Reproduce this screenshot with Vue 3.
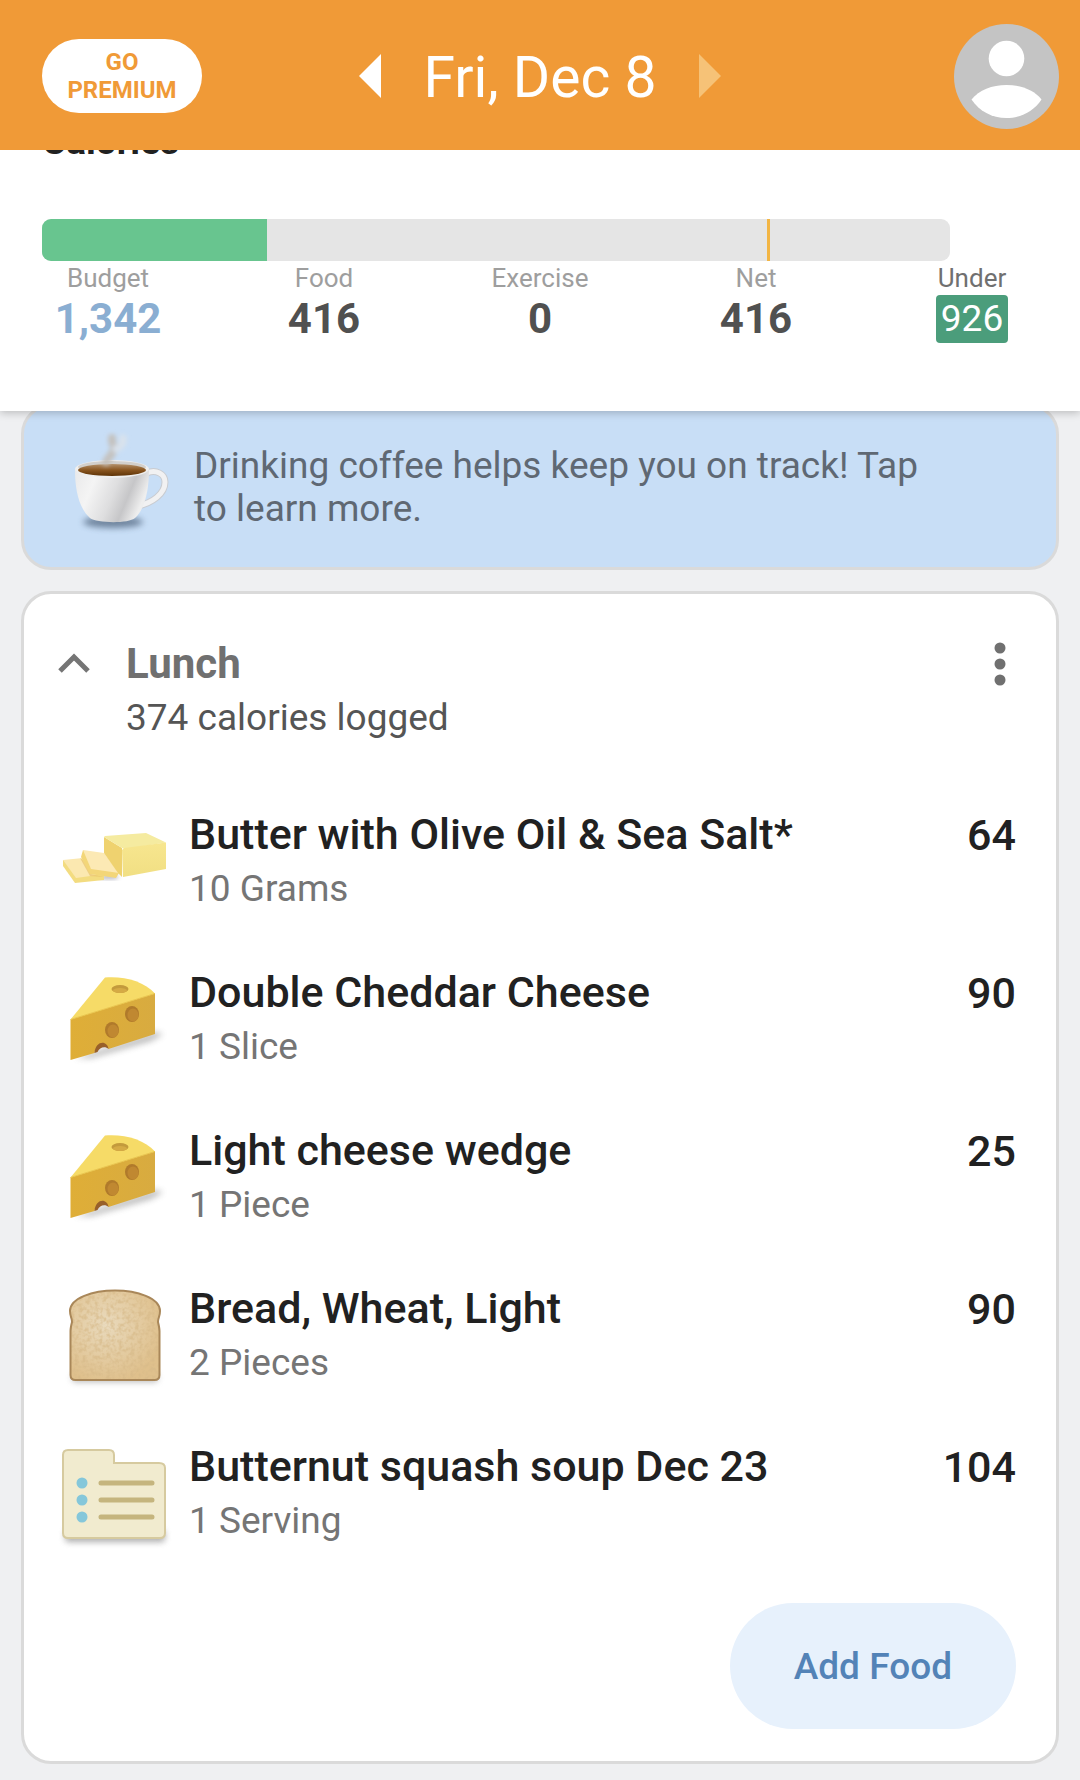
<script setup>
import { ref, computed } from 'vue'

const budget = 1342
const food = 416
const exercise = 0
const net = computed(() => food - exercise)

// the bar runs a quarter past the budget
const barMax = budget * 1.25
const fillWidth = computed(() => (net.value / barMax) * 100 + '%')

const expanded = ref(true)

const meal = {
	name: 'Lunch',
	logged: 374,
	items: [
		{ name: 'Butter with Olive Oil & Sea Salt*', amount: '10 Grams', calories: 64, icon: 'butter' },
		{ name: 'Double Cheddar Cheese', amount: '1 Slice', calories: 90, icon: 'cheese' },
		{ name: 'Light cheese wedge', amount: '1 Piece', calories: 25, icon: 'cheese' },
		{ name: 'Bread, Wheat, Light', amount: '2 Pieces', calories: 90, icon: 'bread' },
		{ name: 'Butternut squash soup Dec 23', amount: '1 Serving', calories: 104, icon: 'recipe' },
	],
}
</script>

<template>
	<div class="page">
		<!-- shared gradients and filters -->
		<svg class="defs" width="0" height="0" aria-hidden="true">
			<defs>
				<filter id="soft" x="-50%" y="-100%" width="200%" height="300%">
					<feGaussianBlur stdDeviation="3" />
				</filter>
				<filter id="steam" x="-50%" y="-50%" width="200%" height="200%">
					<feGaussianBlur stdDeviation="2" />
				</filter>
				<filter id="grain" x="0" y="0" width="100%" height="100%">
					<feTurbulence type="fractalNoise" baseFrequency="0.25" numOctaves="2" seed="4" />
					<feColorMatrix values="0 0 0 0 0.68  0 0 0 0 0.49  0 0 0 0 0.25  3.2 0 0 0 -1.3" />
					<feComposite in2="SourceGraphic" operator="in" />
				</filter>
				<linearGradient id="cup" x1="0" y1="0" x2="1" y2="0.3">
					<stop offset="0" stop-color="#e9e9ea" />
					<stop offset="0.3" stop-color="#f4f4f4" />
					<stop offset="0.6" stop-color="#dededf" />
					<stop offset="0.8" stop-color="#c6c6c8" />
					<stop offset="1" stop-color="#eeeeee" />
				</linearGradient>
				<linearGradient id="coffee" x1="0" y1="0" x2="0" y2="1">
					<stop offset="0" stop-color="#b3906a" />
					<stop offset="0.5" stop-color="#8a5620" />
					<stop offset="1" stop-color="#5d3306" />
				</linearGradient>
				<linearGradient id="rind" x1="0" y1="0" x2="1" y2="0">
					<stop offset="0" stop-color="#dfae37" />
					<stop offset="1" stop-color="#d8ab40" />
				</linearGradient>
				<linearGradient id="butterFront" x1="0" y1="0" x2="0" y2="1">
					<stop offset="0" stop-color="#f7e68f" />
					<stop offset="1" stop-color="#f1df83" />
				</linearGradient>
				<radialGradient id="crumb" cx="0.4" cy="0.38" r="0.65">
					<stop offset="0" stop-color="#e9dabd" />
					<stop offset="1" stop-color="#dfc08c" />
				</radialGradient>
			</defs>
		</svg>

		<header class="topbar">
			<button type="button" class="premium">GO<br />PREMIUM</button>
			<div class="date-nav">
				<button type="button" class="arrow" aria-label="Previous day">
					<svg width="22" height="44" viewBox="0 0 22 44"><path d="M22 0v44L0 22z" fill="#fff" /></svg>
				</button>
				<h1>Fri, Dec 8</h1>
				<button type="button" class="arrow" aria-label="Next day">
					<svg width="22" height="44" viewBox="0 0 22 44"><path d="M0 0v44l22-22z" fill="#f6c277" /></svg>
				</button>
			</div>
			<button type="button" class="avatar" aria-label="Profile">
				<svg width="105" height="105" viewBox="0 0 105 105">
					<circle cx="52.5" cy="52.5" r="52.5" fill="#c4c4c4" />
					<circle cx="52.5" cy="34.5" r="17.8" fill="#fff" />
					<path d="M17.5 75.5C25 66 38 61 52.5 61S80 66 87.5 75.5C80 87 67 94 52.5 94S25 87 17.5 75.5z" fill="#fff" />
				</svg>
			</button>
		</header>

		<section class="summary">
			<h2>Calories</h2>
			<div
				class="bar"
				role="progressbar"
				aria-label="Net calories"
				aria-valuemin="0"
				:aria-valuemax="budget"
				:aria-valuenow="net"
			>
				<div class="bar-fill" :style="{ width: fillWidth }"></div>
				<div class="bar-mark"></div>
			</div>
			<dl class="totals">
				<div class="total budget">
					<dt>Budget</dt>
					<dd>{{ budget.toLocaleString('en-US') }}</dd>
				</div>
				<div class="total">
					<dt>Food</dt>
					<dd>{{ food }}</dd>
				</div>
				<div class="total">
					<dt>Exercise</dt>
					<dd>{{ exercise }}</dd>
				</div>
				<div class="total">
					<dt>Net</dt>
					<dd>{{ net }}</dd>
				</div>
				<div class="total under">
					<dt>Under</dt>
					<dd>{{ budget - net }}</dd>
				</div>
			</dl>
		</section>

		<main>
			<a class="tip" href="#coffee">
				<svg class="icon" viewBox="0 0 104 104" aria-hidden="true">
					<ellipse cx="43" cy="87" rx="30" ry="6" fill="#40546e" opacity="0.65" filter="url(#soft)" />
					<path d="M77 38c9-4 18 1 18 9 0 12-13 21-27 24" fill="none" stroke="#c9ccd1" stroke-width="7" />
					<path d="M77 38c9-4 18 1 18 9 0 12-13 21-27 24" fill="none" stroke="#f1f1f2" stroke-width="5" />
					<path d="M5 34c0 22 4 39 15 49 6 5 38 6 45 0 10-9 14-28 14-49z" fill="url(#cup)" />
					<ellipse cx="42" cy="34" rx="37" ry="9" fill="#efefef" />
					<ellipse cx="42" cy="32" rx="34" ry="6" fill="#d2cfcb" />
					<ellipse cx="42" cy="35" rx="34" ry="6" fill="url(#coffee)" />
					<g fill="none" stroke-linecap="round" filter="url(#steam)">
						<path d="M36 27c3-7 9-9 8-15-1-4-3-5-2-9" stroke="#c3bdb6" stroke-width="8" opacity="0.85" />
						<path d="M46 14c5-2 8-6 7-11" stroke="#d9e2ec" stroke-width="7" />
					</g>
				</svg>
				<span>Drinking coffee helps keep you on track! Tap to learn more.</span>
			</a>

			<section class="card">
				<div class="meal-head">
					<button
						type="button"
						class="toggle"
						aria-label="Collapse meal"
						:aria-expanded="expanded"
						@click="expanded = !expanded"
					>
						<svg width="32" height="20" viewBox="0 0 32 20">
							<path d="M2 18L16 4l14 14" fill="none" stroke="#757575" stroke-width="5" />
						</svg>
					</button>
					<div class="meal-title">
						<h2>{{ meal.name }}</h2>
						<p>{{ meal.logged }} calories logged</p>
					</div>
					<button type="button" class="more" aria-label="More options">
						<svg width="12" height="44" viewBox="0 0 12 44" fill="#707070">
							<circle cx="6" cy="6" r="5.5" />
							<circle cx="6" cy="22" r="5.5" />
							<circle cx="6" cy="38" r="5.5" />
						</svg>
					</button>
				</div>

				<ul v-show="expanded" class="foods">
					<li v-for="item in meal.items" :key="item.name" class="food">
						<svg class="icon" viewBox="0 0 104 104" aria-hidden="true">
							<g v-if="item.icon === 'butter'">
								<ellipse cx="46" cy="67" rx="10" ry="2" fill="#777788" opacity="0.6" filter="url(#steam)" />
								<path d="M0 50v6l12 17 29-3v-6z" fill="#f3dc80" />
								<path d="M0 50l20-2 22 16-29 4z" fill="#fbe8b0" />
								<path d="M17 48l3 2 8 14 13 3-14-1z" fill="#e6bd62" opacity="0.6" />
								<path d="M20 40l-2 7 9 17 26 4 3-5-10-6z" fill="#f3d678" />
								<path d="M20 40l21 3 15 20-28-4z" fill="#fce9b4" />
								<path d="M41 27l18 11v29l-4-4-14-20z" fill="#efd26f" />
								<path d="M41 27l1-1 41-3 20 9.5L62 39l-3-1z" fill="#f5eba0" />
								<path d="M59 40l2-2 42-5.500V59L60 67z" fill="url(#butterFront)" />
							</g>
							<g v-else-if="item.icon === 'cheese'">
								<path d="M12 90L92 64l8 2-12 7-60 17z" fill="#555" opacity="0.4" filter="url(#soft)" />
								<path d="M7.5 51.5L42 9.5c20-1.5 39 4 50 16z" fill="#f6db67" />
								<path d="M7.5 51.500L92 25.500V66L45.500 81c-2-7-12-7-14 4L7.500 92z" fill="url(#rind)" />
								<path d="M31.500 85c1-13 13-13 14-4-3-3-9-2-11 3z" fill="#98602a" />
								<path d="M7.500 51.500L92 25.500" stroke="#eac64d" />
								<ellipse cx="57" cy="21" rx="8.500" ry="4" fill="#c39a3c" />
								<ellipse cx="57" cy="22.500" rx="7" ry="2.500" fill="#d5aa45" />
								<ellipse cx="49" cy="62" rx="7" ry="8" fill="#b07a2b" />
								<ellipse cx="50" cy="63" rx="5.500" ry="6.500" fill="#c08831" />
								<ellipse cx="69" cy="46" rx="7" ry="8" fill="#b07a2b" />
								<ellipse cx="70" cy="47" rx="5.500" ry="6.500" fill="#c08831" />
							</g>
							<g v-else-if="item.icon === 'bread'">
								<rect x="9" y="90" width="86" height="8" rx="4" fill="#777" opacity="0.5" filter="url(#soft)" />
								<path
									d="M7 27C7 14 30 6.500 52 6.500S97 14 97 27c0 6-2 6-2 11 1 4 1.500 6 1.500 9v44c0 3-2 5-5 5h-79c-3 0-5-2-5-5V47c0-3 .5-5 1.500-9 0-5-2-5-2-11z"
									fill="url(#crumb)"
								/>
								<path
									d="M7 27C7 14 30 6.500 52 6.500S97 14 97 27c0 6-2 6-2 11 1 4 1.500 6 1.500 9v44c0 3-2 5-5 5h-79c-3 0-5-2-5-5V47c0-3 .5-5 1.500-9 0-5-2-5-2-11z"
									filter="url(#grain)"
									opacity="0.65"
								/>
								<path
									d="M7 27C7 14 30 6.500 52 6.500S97 14 97 27c0 6-2 6-2 11 1 4 1.500 6 1.500 9v44c0 3-2 5-5 5h-79c-3 0-5-2-5-5V47c0-3 .5-5 1.500-9 0-5-2-5-2-11z"
									fill="none"
									stroke="#a98759"
									stroke-width="2"
								/>
							</g>
							<g v-else>
								<rect x="2" y="88" width="100" height="12" rx="4" fill="#777" opacity="0.6" filter="url(#soft)" />
								<path
									d="M5 8h41c3 0 5 2 5 5v8h45c4 0 6 2 6 5v65c0 3-2 5-5 5H5c-3 0-5-2-5-5V13c0-3 2-5 5-5z"
									fill="#f1ebcf"
									stroke="#d6ca9f"
									stroke-width="2"
								/>
								<g fill="#85c7da">
									<circle cx="19" cy="41" r="5.500" />
									<circle cx="19" cy="58" r="5.500" />
									<circle cx="19" cy="75" r="5.500" />
								</g>
								<path d="M38 41h51M38 58h51M38 75h51" stroke="#c5b57e" stroke-width="5" stroke-linecap="round" />
							</g>
						</svg>
						<div class="food-text">
							<h3>{{ item.name }}</h3>
							<p>{{ item.amount }}</p>
						</div>
						<span class="calories">{{ item.calories }}</span>
					</li>
				</ul>

				<button type="button" class="add">Add Food</button>
			</section>
		</main>
	</div>
</template>

<style>
body {
	margin: 0;
	background: #eff0f2;
}
</style>

<style scoped>
.page {
	font-family: Roboto, sans-serif;
	color: #212121;
}
h1,
h2,
h3,
p,
dl,
dd,
ul {
	margin: 0;
	padding: 0;
}
button {
	border: 0;
	padding: 0;
	background: none;
	font-family: inherit;
	cursor: pointer;
}
button svg {
	display: block;
}
.defs {
	position: absolute;
}
.icon {
	width: 104px;
	height: 104px;
	flex: none;
	overflow: visible;
}

/* top bar */
.topbar {
	position: relative;
	z-index: 2;
	display: grid;
	grid-template-columns: 1fr auto 1fr;
	align-items: center;
	box-sizing: border-box;
	height: 150px;
	padding: 2px 21px 0 42px;
	background: #f09a37;
}
.premium {
	justify-self: start;
	width: 160px;
	height: 74px;
	border-radius: 37px;
	background: #fff;
	color: #f09a37;
	font-size: 24px;
	font-weight: 700;
	line-height: 28px;
}
.date-nav {
	display: flex;
	align-items: center;
	gap: 43px;
	/* evens out the unequal side padding */
	margin-right: 21px;
}
.date-nav h1 {
	padding-top: 4px;
	color: #fff;
	font-size: 57px;
	font-weight: 400;
	line-height: 72px;
}
.avatar {
	justify-self: end;
}

/* calorie summary */
.summary {
	position: relative;
	z-index: 1;
	display: flow-root;
	padding-bottom: 68px;
	background: #fff;
	box-shadow: 0 2px 8px rgba(0, 0, 0, 0.22);
}
/* scrolled partly under the top bar */
.summary h2 {
	margin: -30px 42px 55px;
	font-size: 37px;
	font-weight: 700;
	line-height: 44px;
}
.bar {
	position: relative;
	height: 42px;
	margin: 0 12% 0 42px;
	border-radius: 9px;
	background: #e5e5e5;
	overflow: hidden;
}
.bar-fill {
	height: 100%;
	background: #68c58f;
}
.bar-mark {
	position: absolute;
	top: 0;
	left: 80%;
	width: 3px;
	height: 100%;
	margin-left: -2px;
	background: #f2b544;
}
.totals {
	display: grid;
	grid-template-columns: repeat(5, 1fr);
	text-align: center;
}
.total dt {
	color: #9e9e9e;
	font-size: 26px;
	line-height: 34px;
}
.total dd {
	color: #505050;
	font-size: 42px;
	font-weight: 700;
	line-height: 48px;
}
.budget dd {
	color: #8aaed2;
}
.under dt {
	color: #707070;
}
.under dd {
	display: inline-block;
	padding: 0 5px;
	border-radius: 4px;
	background: #4b9d7b;
	color: #fff;
	font-size: 37px;
	font-weight: 400;
}

/* cards */
main {
	padding: 0 21px 16px;
}
.tip {
	display: flex;
	align-items: center;
	gap: 20px;
	margin-top: -7px;
	padding: 28px 120px 28px 46px;
	border: 3px solid #dadada;
	border-radius: 30px;
	background: #c8def6;
	color: #5f6873;
	font-size: 37px;
	line-height: 43px;
	text-decoration: none;
}
.card {
	display: flex;
	flex-direction: column;
	margin-top: 21px;
	padding: 43px 40px 32px 39px;
	border: 3px solid #dadada;
	border-radius: 30px;
	background: #fff;
}
.meal-head {
	display: flex;
	align-items: flex-start;
	margin-left: -5px;
}
.toggle {
	padding: 16px 0;
}
.meal-title {
	flex: 1;
	margin-left: 36px;
}
.meal-title h2 {
	color: #707070;
	font-size: 42px;
	font-weight: 700;
	line-height: 54px;
}
.meal-title p {
	color: #555;
	font-size: 37px;
	line-height: 54px;
}
.more {
	padding: 5px 10px;
}
.foods {
	display: flex;
	flex-direction: column;
	gap: 48px;
	margin-top: 62px;
	list-style: none;
}
.food {
	display: flex;
	align-items: center;
	gap: 22px;
}
.food-text {
	flex: 1;
}
.food h3 {
	font-size: 43px;
	font-weight: 500;
	line-height: 54px;
}
.food p {
	color: #757575;
	font-size: 37px;
	line-height: 56px;
}
.calories {
	align-self: flex-start;
	font-size: 43px;
	font-weight: 500;
	line-height: 56px;
}
.add {
	align-self: flex-end;
	height: 126px;
	margin-top: 54px;
	padding: 0 64px;
	border-radius: 63px;
	background: #e7f1fc;
	color: #5383b7;
	font-size: 37px;
	font-weight: 500;
}
</style>
